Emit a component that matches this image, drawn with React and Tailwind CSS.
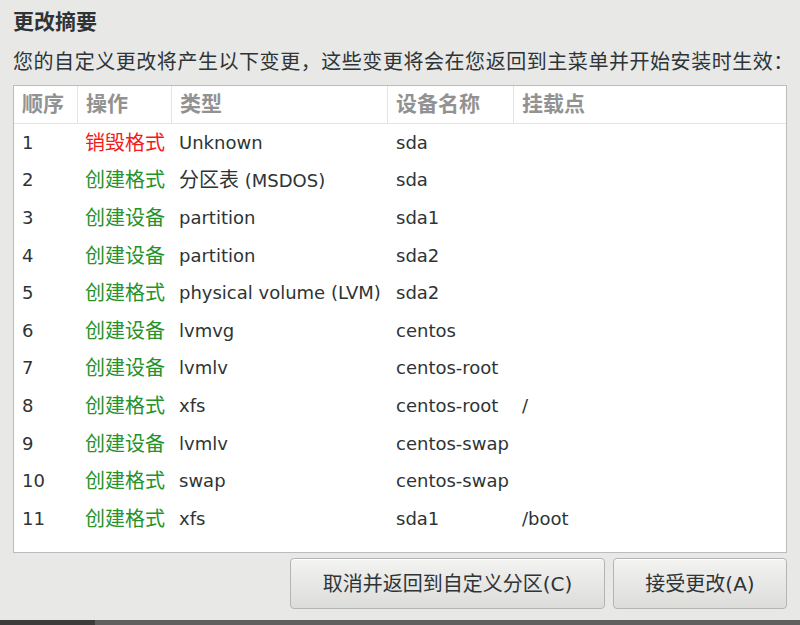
import React from 'react';

const rows = [
  ['1', '销毁格式', 'Unknown', 'sda', '', true],
  ['2', '创建格式', '分区表 (MSDOS)', 'sda', ''],
  ['3', '创建设备', 'partition', 'sda1', ''],
  ['4', '创建设备', 'partition', 'sda2', ''],
  ['5', '创建格式', 'physical volume (LVM)', 'sda2', ''],
  ['6', '创建设备', 'lvmvg', 'centos', ''],
  ['7', '创建设备', 'lvmlv', 'centos-root', ''],
  ['8', '创建格式', 'xfs', 'centos-root', '/'],
  ['9', '创建设备', 'lvmlv', 'centos-swap', ''],
  ['10', '创建格式', 'swap', 'centos-swap', ''],
  ['11', '创建格式', 'xfs', 'sda1', '/boot'],
];

const headers = ['顺序', '操作', '类型', '设备名称', '挂载点'];
const cols = 'grid grid-cols-[64px_94px_216px_126px_1fr]';

// CJK glyphs read a bit larger than the latin ones in the original
function Mixed({ text }) {
  const parts = text.split(/([\u4e00-\u9fff]+)/).filter(Boolean);
  return parts.map((p, i) =>
    /[\u4e00-\u9fff]/.test(p) ? <span key={i} className="text-[20px]">{p}</span> : <span key={i}>{p}</span>
  );
}

export default function App() {
  return (
    <div
      className="w-[800px] h-[625px] bg-[#e8e8e7] flex flex-col text-[#2e3436] overflow-hidden"
      style={{ fontFamily: '"DejaVu Sans", "Noto Sans CJK SC", sans-serif' }}
    >
      <div className="flex-1 flex flex-col px-[13px] pt-[8px]">
        <h1 className="text-[21px] font-bold leading-[28px]">更改摘要</h1>
        <p className="mt-[12px] text-[20px] leading-[28px] tracking-[0.55px] whitespace-nowrap">
          您的自定义更改将产生以下变更，这些变更将会在您返回到主菜单并开始安装时生效：
        </p>

        <div className="mt-[9px] h-[468px] w-[774px] bg-white border-[1.5px] border-[#bcbcbc] flex flex-col">
          <div className={`${cols} h-[38px] shrink-0 border-b border-[#e4e4e4]`}>
            {headers.map((h, i) => (
              <div
                key={h}
                className={`flex items-center px-[8px] text-[21px] font-bold text-[#929292] whitespace-nowrap ${i < 4 ? 'border-r border-[#e4e4e4]' : ''}`}
              >
                {h}
              </div>
            ))}
          </div>
          {rows.map(([n, op, type, dev, mnt, destroy]) => (
            <div key={n} className={`${cols} h-[37.6px] shrink-0 items-center text-[18px] leading-[24px]`}>
              <div className="pl-[8px]">{n}</div>
              <div className={`pl-[7px] text-[20px] whitespace-nowrap ${destroy ? 'text-[#f21b1b]' : 'text-[#26922a]'}`}>{op}</div>
              <div className="pl-[7px] whitespace-nowrap"><Mixed text={type} /></div>
              <div className="pl-[8px] whitespace-nowrap">{dev}</div>
              <div className="pl-[8px] whitespace-nowrap">{mnt}</div>
            </div>
          ))}
        </div>

        <div className="mt-[5px] flex justify-end gap-[8px]">
          <button className="w-[315px] h-[51px] rounded-[4px] border border-[#b4b4b4] bg-gradient-to-b from-[#f3f3f2] to-[#dcdcdb] text-[20px] text-[#2e3436] shadow-[inset_0_1px_0_#fff]">
            取消并返回到自定义分区(C)
          </button>
          <button className="w-[174px] h-[51px] rounded-[4px] border border-[#b4b4b4] bg-gradient-to-b from-[#f3f3f2] to-[#dcdcdb] text-[20px] text-[#2e3436] shadow-[inset_0_1px_0_#fff]">
            接受更改(A)
          </button>
        </div>
      </div>

      <div className="h-[5px] flex">
        <div className="w-[95px] bg-[#3c3c3c]" />
        <div className="flex-1 bg-[#606060]" />
      </div>
    </div>
  );
}
